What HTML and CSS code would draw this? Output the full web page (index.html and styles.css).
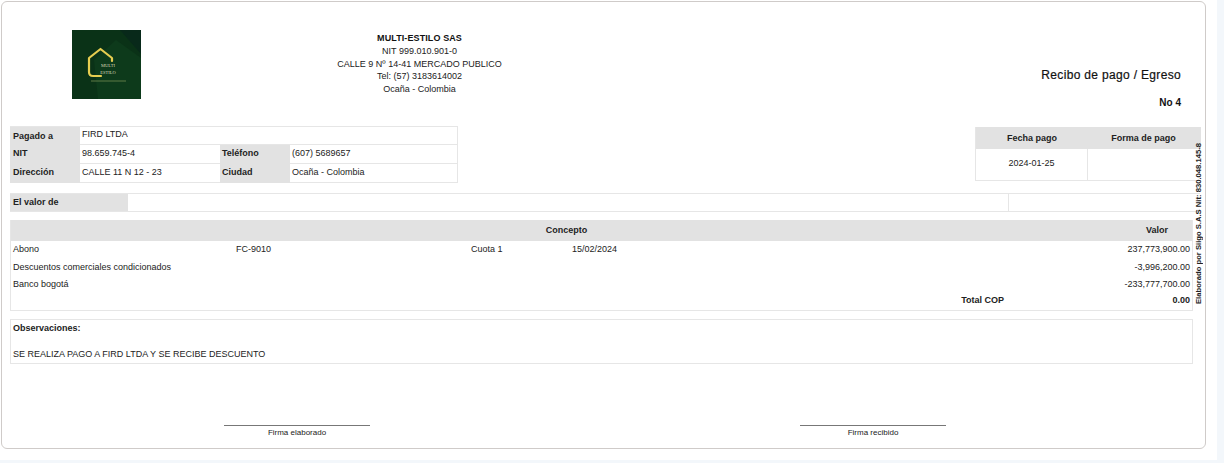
FILE: index.html
```html
<!DOCTYPE html>
<html lang="es">
<head>
<meta charset="utf-8">
<title>Recibo de pago / Egreso</title>
<link rel="stylesheet" href="styles.css">
</head>
<body>
<main class="sheet">
  <section class="card">
    <header class="head">
      <div class="logo-wrap">
        <svg class="logo" width="69" height="69" viewBox="0 0 69 69" role="img" aria-label="Multi Estilo">
          <rect width="69" height="69" fill="#0a3217"/>
          <path d="M26 69L22 30 44 10 69 28V69Z" fill="#0d3a1b"/>
          <path d="M48 0H69V24Z" fill="#08291a"/>
          <path d="M40 31V28L28.500 19 17 28V42Q17 46 21 46H29" fill="none" stroke="#e6cd50" stroke-width="2.200" stroke-linejoin="round" stroke-linecap="round"/>
          <text class="logo-t" x="36" y="37">MULTI</text>
          <text class="logo-t" x="36" y="44">ESTILO</text>
          <rect x="19" y="50.500" width="35" height="1" fill="#5f7a47"/>
        </svg>
      </div>
      <div class="company">
        <strong class="company-name">MULTI-ESTILO SAS</strong>
        <span>NIT 999.010.901-0</span>
        <span>CALLE 9 Nº 14-41 MERCADO PUBLICO</span>
        <span>Tel: (57) 3183614002</span>
        <span>Ocaña - Colombia</span>
      </div>
      <div class="doc">
        <h1 class="doc-title">Recibo de pago / Egreso</h1>
        <div class="doc-no">No 4</div>
      </div>
    </header>

    <div class="info-row">
      <div class="party">
        <div class="lbl r1">Pagado a</div>
        <div class="val wide r1">FIRD LTDA</div>
        <div class="lbl">NIT</div>
        <div class="val">98.659.745-4</div>
        <div class="lbl lbl2">Teléfono</div>
        <div class="val">(607) 5689657</div>
        <div class="lbl">Dirección</div>
        <div class="val">CALLE 11 N 12 - 23</div>
        <div class="lbl lbl2">Ciudad</div>
        <div class="val">Ocaña - Colombia</div>
      </div>
      <div class="pay">
        <div class="pay-h">Fecha pago</div>
        <div class="pay-h pay-h2">Forma de pago</div>
        <div class="pay-c pay-c1">2024-01-25</div>
        <div class="pay-c"></div>
      </div>
    </div>

    <div class="amount">
      <div class="amount-l">El valor de</div>
      <div class="amount-v"></div>
      <div class="amount-e"></div>
    </div>

    <div class="lines">
      <div class="lines-h"><span class="h-c">Concepto</span><span class="h-v">Valor</span></div>
      <div class="line"><span class="c1">Abono</span><span class="c2">FC-9010</span><span class="c3">Cuota 1</span><span class="c4">15/02/2024</span><span class="c5">237,773,900.00</span></div>
      <div class="line l2"><span class="c-wide">Descuentos comerciales condicionados</span><span class="c5">-3,996,200.00</span></div>
      <div class="line l3"><span class="c-wide">Banco bogotá</span><span class="c5">-233,777,700.00</span></div>
      <div class="line total"><span class="t-l">Total COP</span><span class="c5">0.00</span></div>
    </div>

    <div class="obs">
      <strong class="obs-t">Observaciones:</strong>
      <p class="obs-p">SE REALIZA PAGO A FIRD LTDA Y SE RECIBE DESCUENTO</p>
    </div>

    <div class="signs">
      <div class="sign s1">Firma elaborado</div>
      <div class="sign s2">Firma recibido</div>
    </div>

    <div class="vertical">Elaborado por Siigo S.A.S Nit: 830.048.145-8</div>
  </section>
</main>
</body>
</html>
```
FILE: styles.css
```css
* { box-sizing: border-box; }
html, body { margin: 0; padding: 0; }
body {
  width: 1224px;
  height: 463px;
  overflow: hidden;
  background: #f3f7fb;
  font-family: "Liberation Sans", Arial, sans-serif;
  font-size: 9px;
  color: #222;
}
.sheet { width: 1217px; height: 460px; background: #fff; padding: 1px 0 0 1px; }
.card {
  position: relative;
  width: 1205px;
  height: 448px;
  border: 1px solid #cfcbc9;
  border-radius: 6px;
  padding: 0 0 0 8px;
}

.head { display: flex; height: 124px; }
.logo-wrap { width: 62px; flex: none; padding: 28px 0 0 62px; box-sizing: content-box; }
.logo { display: block; }
.logo-t { font-family: "Liberation Serif", serif; font-size: 4.500px; fill: #d9d8b8; text-anchor: middle; }
.company {
  width: 300px;
  margin-left: 135.500px;
  padding-top: 30px;
  display: flex;
  flex-direction: column;
  align-items: center;
  line-height: 12.800px;
  font-size: 9px;
}
.company-name { font-size: 9px; letter-spacing: .1px; color: #111; }
.doc { flex: 1; padding: 65px 24px 0 0; text-align: right; }
.doc-title { margin: 0; font-size: 12px; font-weight: 400; line-height: 16px; letter-spacing: .33px; color: #111; -webkit-text-stroke: .2px #111; }
.doc-no { margin-top: 14px; font-size: 10px; font-weight: 700; line-height: 12px; color: #111; }

.info-row { display: flex; justify-content: space-between; width: 1190px; height: 56px; }
.party {
  width: 448px;
  height: 56px;
  display: grid;
  grid-template-columns: 70px 140px 70px 168px;
  grid-template-rows: 18px 19px 19px;
  border-right: 1px solid #e6e6e6;
  border-top: 1px solid #e6e6e6;
}
.lbl { background: #e2e2e2; font-weight: 700; padding: 2px 0 0 3px; line-height: 12px; color: #222; }
.lbl2 { padding-left: 2px; }
.val { padding: 2px 0 0 2px; line-height: 13px; border-bottom: 1px solid #e6e6e6; }
.wide { grid-column: 2 / 5; }
.lbl.r1 { padding-top: 3px; }
.val.r1 { padding-top: 1px; }

.pay {
  width: 225px;
  height: 54px;
  margin-top: 1px;
  display: grid;
  grid-template-columns: 112px 113px;
  grid-template-rows: 22px 32px;
  text-align: center;
  border-left: 1px solid #e6e6e6;
}
.pay-h { background: #e2e2e2; font-weight: 700; line-height: 22px; }
.pay-h2 { padding-right: 2px; }
.pay-c { border-bottom: 1px solid #e6e6e6; line-height: 28px; }
.pay-c1 { border-right: 1px solid #e6e6e6; }

.amount {
  display: flex;
  width: 1190px;
  height: 19px;
  margin-top: 11px;
  border-top: 1px solid #e6e6e6;
  border-bottom: 1px solid #e6e6e6;
}
.amount-l { width: 118px; background: #e2e2e2; font-weight: 700; line-height: 16px; padding-left: 3px; }
.amount-v { width: 881px; border-right: 1px solid #e6e6e6; }
.amount-e { flex: 1; }

.lines {
  width: 1183px;
  height: 91px;
  margin-top: 8px;
  border: 1px solid #e6e6e6;
  border-top: 0;
}
.lines-h { display: flex; height: 21px; background: #e2e2e2; font-weight: 700; line-height: 20px; }
.h-c { width: 1112px; text-align: center; }
.h-v { width: 70px; text-align: center; }
.line { display: flex; height: 17px; line-height: 17px; padding-left: 2px; }
.line.l2 { height: 18px; line-height: 18px; }
.line.l3 { height: 17px; line-height: 17px; }
.c1 { width: 223px; }
.c2 { width: 235px; }
.c3 { width: 101px; }
.c4 { width: 200px; }
.c-wide { width: 759px; }
.c5 { flex: 1; text-align: right; padding-right: 2px; }
.line.total { font-weight: 700; line-height: 15px; }
.t-l { width: 991px; text-align: right; }

.obs {
  width: 1183px;
  height: 45px;
  margin-top: 8px;
  padding: 2px 0 0 2px;
  border: 1px solid #e6e6e6;
  line-height: 12px;
}
.obs-t { display: block; font-weight: 700; }
.obs-p { margin: 14px 0 0; }

.signs { display: flex; padding: 61px 0 0 214px; }
.sign { width: 146px; border-top: 1px solid #777; text-align: center; font-size: 8px; line-height: 14px; }
.s2 { margin-left: 430px; }

.vertical {
  position: absolute;
  left: 1192px;
  top: 140px;
  height: 162px;
  writing-mode: vertical-rl;
  transform: rotate(180deg);
  white-space: nowrap;
  font-size: 7.650px;
  font-weight: 700;
  line-height: 10px;
  color: #222;
}
```
